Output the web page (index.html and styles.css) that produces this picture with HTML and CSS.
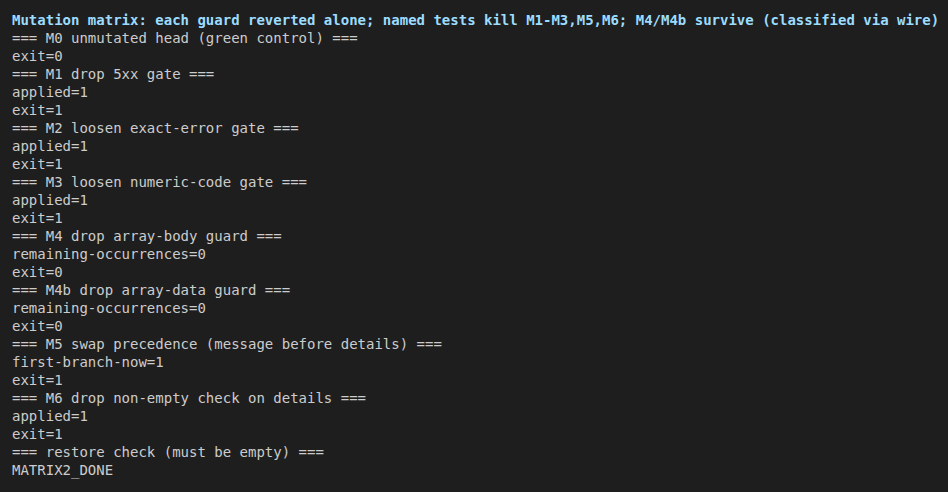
FILE: index.html
```html
<!DOCTYPE html>
<html>
<head>
<meta charset="utf-8">
<link rel="stylesheet" href="styles.css">
</head>
<body>
<div class="term">
<div class="title">Mutation matrix: each guard reverted alone; named tests kill M1-M3,M5,M6; M4/M4b survive (classified via wire)</div>
<pre class="out">=== M0 unmutated head (green control) ===
exit=0
=== M1 drop 5xx gate ===
applied=1
exit=1
=== M2 loosen exact-error gate ===
applied=1
exit=1
=== M3 loosen numeric-code gate ===
applied=1
exit=1
=== M4 drop array-body guard ===
remaining-occurrences=0
exit=0
=== M4b drop array-data guard ===
remaining-occurrences=0
exit=0
=== M5 swap precedence (message before details) ===
first-branch-now=1
exit=1
=== M6 drop non-empty check on details ===
applied=1
exit=1
=== restore check (must be empty) ===
MATRIX2_DONE</pre>
</div>
</body>
</html>
```
FILE: styles.css
```css
html, body {
  margin: 0;
  padding: 0;
  background: #1e1e1e;
}
.term {
  width: 948px;
  height: 492px;
  box-sizing: border-box;
  padding: 11px 12px;
  font-family: "DejaVu Sans Mono", monospace;
  font-size: 14px;
  line-height: 18px;
  color: #cccccc;
  overflow: hidden;
}
.title {
  color: #9cdcfe;
  font-weight: bold;
  white-space: pre;
}
.out {
  margin: 0;
  font: inherit;
  white-space: pre;
}
```
